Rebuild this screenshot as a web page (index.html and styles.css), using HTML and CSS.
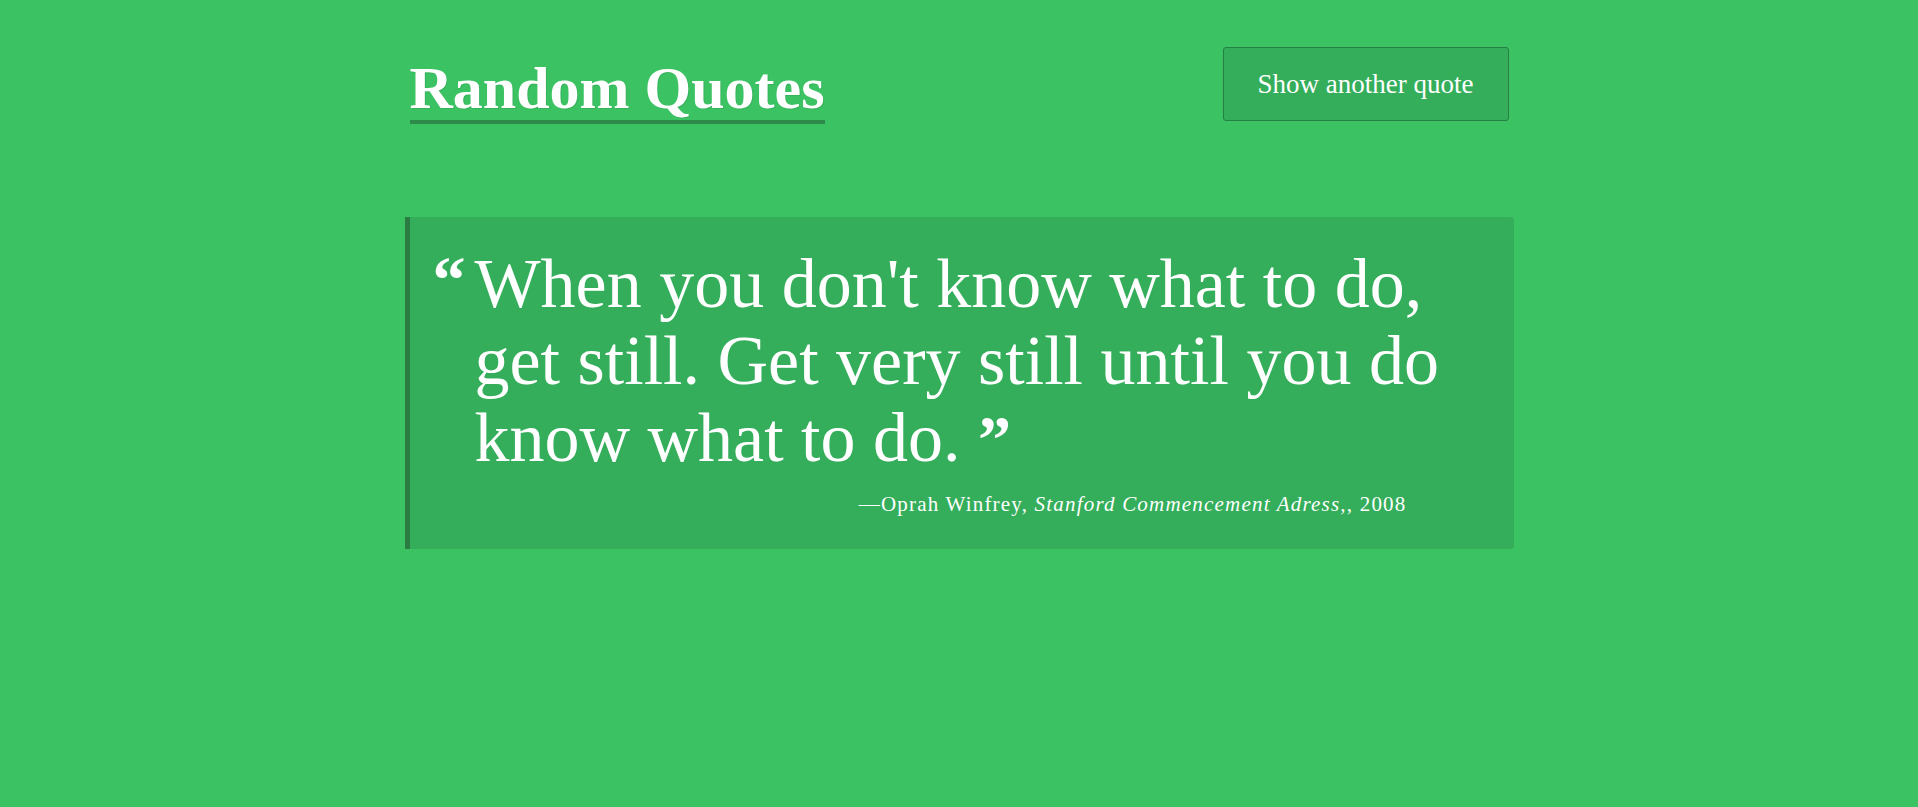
FILE: index.html
```html
<!DOCTYPE html>
<html lang="en">
<head>
<meta charset="utf-8">
<title>Random Quotes</title>
<link rel="stylesheet" href="styles.css">
</head>
<body>
<div class="page">
  <header class="header">
    <h1 class="title">Random Quotes</h1>
    <button class="btn">Show another quote</button>
  </header>
  <blockquote class="quote">
    <p class="quote-text"><span class="qmark open">&ldquo;</span>When you don't know what to do, get still. Get very still until you do know what to do. <span class="qmark close">&rdquo;</span></p>
    <footer class="quote-source">&mdash;Oprah Winfrey, <cite>Stanford Commencement Adress,</cite>, 2008</footer>
  </blockquote>
</div>
</body>
</html>
```
FILE: styles.css
```css
html, body {
  margin: 0;
  padding: 0;
}
body {
  background: #3bc263;
  color: #fff;
  font-family: "Liberation Serif", "DejaVu Serif", serif;
  min-height: 100vh;
}
.page {
  width: 1109px;
  margin: 0 auto;
}
.header {
  display: flex;
  justify-content: space-between;
  align-items: flex-start;
  padding: 47px 5px 0 5px;
}
.title {
  margin: 10px 0 0 0;
  font-size: 60px;
  font-weight: 700;
  line-height: 63px;
  border-bottom: 4px solid #2d8a4a;
  text-shadow: 1px 1px 0 rgba(0,0,0,0.08);
}
.btn {
  width: 286px;
  height: 74px;
  background: #34ae5b;
  color: #fff;
  border: 1px solid #287f43;
  border-radius: 3px;
  font-family: inherit;
  font-size: 27px;
  cursor: pointer;
  padding: 0;
}
.quote {
  margin: 93px 0 0 0;
  background: #34ae5b;
  border-left: 5px solid #2a7c43;
  border-radius: 0 3px 3px 0;
  padding: 28px 54px 32px 23px;
}
.quote-text {
  margin: 0;
  padding-left: 42px;
  text-indent: -42px;
  font-size: 70px;
  line-height: 77px;
}
.qmark {
  font-weight: 700;
  font-size: 66px;
  line-height: 0;
}
.qmark.open {
  display: inline-block;
  width: 42px;
  text-indent: 0;
  vertical-align: 5px;
}
.quote-source {
  margin-top: 16px;
  text-align: right;
  padding-right: 53px;
  font-size: 21px;
  line-height: 25px;
  letter-spacing: 1.2px;
}
.quote-source cite {
  font-style: italic;
}
```
